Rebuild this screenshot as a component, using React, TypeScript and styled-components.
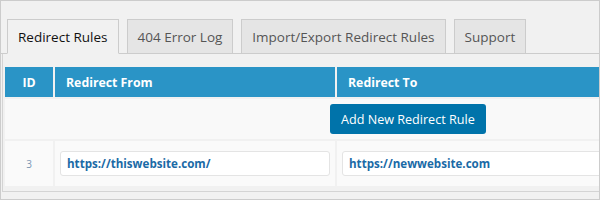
import React from 'react'
import styled, { createGlobalStyle } from 'styled-components'

const GlobalStyle = createGlobalStyle`
  html, body {
    margin: 0;
    padding: 0;
    background: #f1f1f1;
  }
  * {
    box-sizing: border-box;
  }
`

const Frame = styled.div`
  width: 600px;
  height: 200px;
  border: 1px solid #cccccc;
  background: #f1f1f1;
  padding-top: 17px;
  overflow: hidden;
  font-family: 'Open Sans', 'Noto Sans', sans-serif;
`

const TabBar = styled.nav`
  display: flex;
  align-items: flex-end;
  gap: 8px;
  padding-left: 6px;
  border-bottom: 1px solid #cccccc;
  height: 36px;
`

const Tab = styled.a<{ $active?: boolean }>`
  display: flex;
  align-items: center;
  height: 35px;
  padding: 0 10px;
  margin-bottom: -1px;
  border: 1px solid #cccccc;
  border-bottom-color: ${(p) => (p.$active ? '#f1f1f1' : '#cccccc')};
  background: ${(p) => (p.$active ? '#f1f1f1' : '#e5e5e5')};
  color: ${(p) => (p.$active ? '#111111' : '#555555')};
  font-size: 13.5px;
  white-space: nowrap;
`

const Panel = styled.section`
  margin-left: 1px;
  border-left: 1px solid #d4d4d4;
  border-bottom: 1px solid #d4d4d4;
  padding: 13px 0 5px 2px;
`

const Table = styled.div`
  display: grid;
  grid-template-columns: 48px 280px 1fr;
  gap: 2px;
`

const HeadCell = styled.div<{ $center?: boolean }>`
  height: 30px;
  display: flex;
  align-items: center;
  justify-content: ${(p) => (p.$center ? 'center' : 'flex-start')};
  padding-left: ${(p) => (p.$center ? '0' : '11px')};
  background: #2a94c6;
  color: #ffffff;
  font-weight: 700;
  font-size: 12.3px;
`

const ActionRow = styled.div`
  grid-column: 1 / -1;
  height: 40px;
  display: flex;
  align-items: center;
  padding-left: 325px;
  background: #f9f9f9;
`

const AddButton = styled.button`
  height: 30px;
  padding: 0 11px;
  border: none;
  border-radius: 3px;
  background: #0073aa;
  color: #ffffff;
  font-family: inherit;
  font-size: 12.6px;
  cursor: pointer;
`

const Cell = styled.div<{ $center?: boolean }>`
  height: 45px;
  display: flex;
  align-items: center;
  justify-content: ${(p) => (p.$center ? 'center' : 'flex-start')};
  padding-left: ${(p) => (p.$center ? '0' : '5px')};
  background: #fafafa;
  min-width: 0;
`

const IdText = styled.span`
  color: #7b96b4;
  font-size: 10px;
`

const UrlInput = styled.input`
  flex: none;
  width: 270px;
  height: 25px;
  padding: 0 6px;
  border: 1px solid #e4e4e4;
  border-radius: 3px;
  background: #ffffff;
  color: #1a6aa6;
  font-family: inherit;
  font-weight: 700;
  font-size: 11.6px;
  outline: none;
`

const tabs = ['Redirect Rules', '404 Error Log', 'Import/Export Redirect Rules', 'Support']

const rules = [{ id: 3, from: 'https://thiswebsite.com/', to: 'https://newwebsite.com' }]

export default function App() {
  return (
    <>
      <GlobalStyle />
      <Frame>
        <TabBar>
          {tabs.map((t, i) => (
            <Tab key={t} $active={i === 0}>
              {t}
            </Tab>
          ))}
        </TabBar>
        <Panel>
          <Table>
            <HeadCell $center>ID</HeadCell>
            <HeadCell>Redirect From</HeadCell>
            <HeadCell>Redirect To</HeadCell>
            <ActionRow>
              <AddButton>Add New Redirect Rule</AddButton>
            </ActionRow>
            {rules.map((r) => (
              <React.Fragment key={r.id}>
                <Cell $center>
                  <IdText>{r.id}</IdText>
                </Cell>
                <Cell>
                  <UrlInput defaultValue={r.from} />
                </Cell>
                <Cell>
                  <UrlInput defaultValue={r.to} />
                </Cell>
              </React.Fragment>
            ))}
          </Table>
        </Panel>
      </Frame>
    </>
  )
}
